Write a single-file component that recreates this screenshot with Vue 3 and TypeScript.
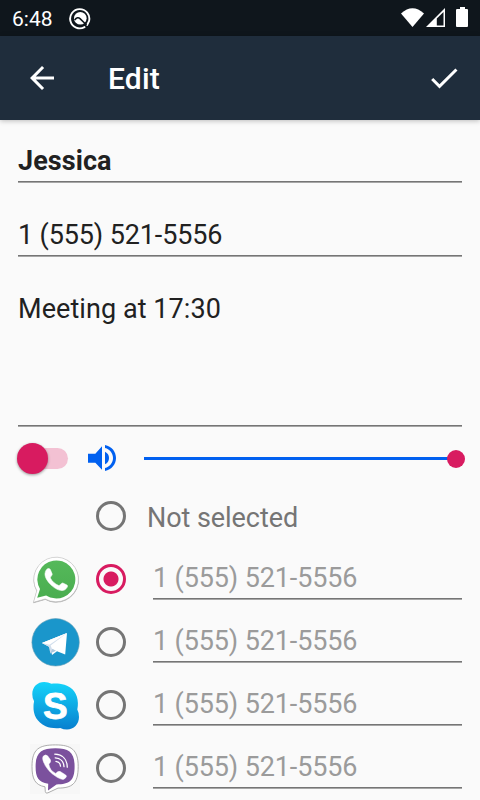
<script setup lang="ts">
import { ref } from 'vue'

type Messenger = 'none' | 'whatsapp' | 'telegram' | 'skype' | 'viber'

const selected = ref<Messenger>('whatsapp')
const name = 'Jessica'
const phone = '1 (555) 521-5556'
const note = 'Meeting at 17:30'
const messengers: Messenger[] = ['whatsapp', 'telegram', 'skype', 'viber']
</script>

<template>
  <div class="screen">
    <div class="status">
      <span class="time">6:48</span>
      <svg class="status-app" viewBox="0 0 24 24" width="24" height="24">
        <path d="M15.5 21.1A9.6 9.6 0 1 1 20.1 14.9L18.2 18.9" fill="none" stroke="#fff" stroke-width="1.9" stroke-linecap="round" />
        <circle cx="11.3" cy="12.2" r="6.3" fill="#fff" />
        <path d="M5.6 14Q8.6 10.2 11 12.6L17.5 19" fill="none" stroke="#0f161c" stroke-width="1.5" />
      </svg>
      <svg class="status-icons" viewBox="0 0 70 24" width="70" height="24">
        <path d="M1 7.5Q12.5-3 24 7.5L12.5 21Z" fill="#fff" />
        <path d="M26 21L45 2V21Z" fill="#fff" />
        <path d="M36.8 19.5V12.6L43.5 6V19.5Z" fill="#0f161c" />
        <path d="M57.2 3H60V1H65V3H67Q68 3 68 4V20Q68 21 67 21H57Q56 21 56 20V4Q56 3 57.2 3Z" fill="#fff" />
      </svg>
    </div>

    <header class="toolbar">
      <svg class="back" viewBox="0 0 24 24" width="36" height="36">
        <path d="M20 11H7.83l5.59-5.59L12 4l-8 8 8 8 1.41-1.41L7.83 13H20v-2z" fill="#fff" />
      </svg>
      <h1>Edit</h1>
      <svg class="done" viewBox="0 0 24 24" width="36" height="36">
        <path d="M9 16.17L4.83 12l-1.42 1.41L9 19 21 7l-1.41-1.41z" fill="#fff" />
      </svg>
    </header>

    <main>
      <div class="field name"><span>{{ name }}</span></div>
      <div class="field phone"><span>{{ phone }}</span></div>
      <div class="field note"><span>{{ note }}</span></div>

      <div class="sound">
        <div class="switch"><i class="knob"></i></div>
        <svg class="volume" viewBox="0 0 84 78" width="28" height="26">
          <g fill="#0060f0">
            <path d="M0 26H22L42 4V74L22 53H0Z" />
            <path d="M51 20Q63 26 63 39T51 58Z" />
            <path d="M51 0C71 4 84 20 84 39S71 74 51 78V69C66 65 75 53 75 39S66 13 51 9Z" />
          </g>
        </svg>
        <div class="slider"><i class="handle"></i></div>
      </div>

      <div class="none-row">
        <button class="radio" :class="{ on: selected === 'none' }" @click="selected = 'none'"></button>
        <span>Not selected</span>
      </div>

      <div v-for="m in messengers" :key="m" class="row">
        <svg class="logo" viewBox="0 0 50 50" width="50" height="50">
          <g v-if="m === 'whatsapp'">
            <defs>
              <linearGradient id="green" x1="0" y1="0" x2="0" y2="1">
                <stop offset="0" stop-color="#55b95a" />
                <stop offset="1" stop-color="#4aad50" />
              </linearGradient>
            </defs>
            <path d="M3.5 47.3L6.8 35.6A22.3 22.3 0 1 1 15.2 43.9Z" transform="translate(.1 .5)" fill="#888" stroke="#bbb" stroke-width=".8" />
            <path d="M3.5 47.3L6.8 35.6A22.3 22.3 0 1 1 15.2 43.9Z" fill="#fff" stroke="#bbb" stroke-width=".5" />
            <path d="M7.2 42.8L10 34.1A19 19 0 1 1 16.1 40.4Z" fill="url(#green)" />
            <path d="M17.3 14.7C18.4 13.7 20.1 13.8 20.7 15.1L22.6 19.6C22.9 20.6 20.4 22.7 20.7 23.5C22.6 27.1 25.3 29.4 29.1 31C30.2 31.3 32.1 28 33.2 28.5L37.3 30.5C39 31.4 36.8 34.3 35.2 35.3C31.9 37.2 26.7 35 22.8 31.6C18.5 27.9 15.2 23.2 15.4 19.2Q15.5 16.5 17.3 14.7Z" fill="#fff" stroke="#fff" stroke-width=".6" transform="translate(-.4 -.5)" />
          </g>
          <g v-else-if="m === 'telegram'">
            <circle cx="25.6" cy="24.3" r="23.7" fill="#1a96cb" stroke="#659db6" stroke-width=".6" />
            <path d="M12 24.9L37 15.1L35.2 36.6L27 33.2L22 37L20.3 29.4Z" fill="#fff" />
            <path d="M12 24.9L37 15.1L20.6 27.6L22.4 32L20.4 35.4L18.8 28.6Z" fill="#d2dfed" />
            <path d="M12 24.9L37 15.1L19.4 26.8Z" fill="#fff" />
            <path d="M20.2 35.6L22.4 30.8L26 32.7Z" fill="#afc8de" />
          </g>
          <g v-else-if="m === 'skype'">
            <defs>
              <linearGradient id="sky" gradientUnits="userSpaceOnUse" x1="0" y1="1" x2="0" y2="48">
                <stop offset="0" stop-color="#14d4fa" />
                <stop offset="1" stop-color="#0880cf" />
              </linearGradient>
            </defs>
            <path d="M2.3 13.2C2.3 5.8 7.5 1 14.2 1Q18.3 1 21.5 2.7C25 2.2 30 2.4 34.5 3.8C43 6.3 47.7 13.5 47.9 22Q48 25 47.3 28.6Q49 31.7 49 36C49 43 43.8 48.6 37 48.6Q33.5 48.6 30.3 47C25 47.5 20 47 15.6 45.2C7 41 3 34 3.5 25Q3.6 22.5 4.1 20.3Q2.3 17.5 2.3 13.2Z" fill="url(#sky)" />
            <text x="25.4" y="37.8" text-anchor="middle" class="skype-s">S</text>
          </g>
          <g v-else>
            <rect x="0" y="0" width="50" height="50" fill="#f7f7f7" />
            <path d="M25.5 .9C41 .9 48.2 5.5 48.2 22.5C48.2 40 42 44 28 44.1L18 48.8Q15 50 15.2 45.8L15 42.8C5 41 2 35 2 22.5C2 5 9 .9 25.5 .9Z" fill="#fff" stroke="#999" stroke-width=".8" />
            <path d="M25.5 4.3C39 4.3 44.6 8.5 44.6 22.5C44.6 36.8 39.5 40.3 26.5 40.4L18 46.5L18.2 39.8C8.5 38.2 5.6 33.8 5.6 22.5C5.6 8.5 11.5 4.3 25.5 4.3Z" fill="#7b519d" />
            <path d="M13.2 12.2Q15.8 9.7 17.8 12.1L20.4 15.7Q21.5 18 18.8 20Q19.6 26.5 25.7 29.4Q28.2 26.7 30.2 27.5L35.7 31Q37.8 32.5 34.3 35.1Q32.2 36.2 27.2 33.3Q16.6 27 13.1 16.8Q12.2 13.8 13.2 12.2Z" fill="#fff" stroke="#fff" stroke-width=".5" />
            <path d="M24.8 10.2C32.5 10.5 37.2 15.4 37.3 23.2M25.2 13.8C30.4 14 33.7 17.5 34 22.6M26 17.4Q30.2 18 30.5 22.2" fill="none" stroke="#fff" stroke-width="1.3" stroke-linecap="round" />
          </g>
        </svg>
        <button class="radio" :class="{ on: selected === m }" @click="selected = m"></button>
        <div class="hint"><span>{{ phone }}</span></div>
      </div>
    </main>
  </div>
</template>

<style>
body {
  overflow: hidden;
  background: #fafafa;
}
</style>

<style scoped>
.screen {
  width: 480px;
  height: 800px;
  overflow: hidden;
  background: #fafafa;
  font: 27px/32px Roboto, sans-serif;
  color: #212121;
}
.status {
  box-sizing: border-box;
  height: 36px;
  padding: 6px 10px 0 12px;
  display: flex;
  align-items: flex-start;
  background: #0f161c;
}
.time {
  width: 57px;
  font-size: 21px;
  line-height: 26px;
  color: #fff;
}
.status-icons {
  margin-left: auto;
}
.toolbar {
  box-sizing: border-box;
  height: 84px;
  padding: 0 18px 0 24px;
  display: flex;
  align-items: center;
  background: #1f2d3c;
  box-shadow: 0 1px 5px rgba(0, 0, 0, 0.25);
}
h1 {
  margin: 0 auto 0 48px;
  padding-top: 1px;
  font-size: 30px;
  line-height: 35px;
  font-weight: 500;
  letter-spacing: 0.2px;
  color: #fff;
}
main {
  padding: 25px 18px 0;
}
.field,
.hint {
  box-sizing: border-box;
  height: 38px;
  border-bottom: 1px solid #a6a6a6;
  box-shadow: inset 0 -1px #757575;
}
.field {
  margin-bottom: 36px;
}
.name {
  font-weight: 700;
  letter-spacing: 0.07px;
}
.phone,
.hint {
  letter-spacing: -0.13px;
}
.field.note {
  height: 134px;
  margin-bottom: 0;
  letter-spacing: 0.07px;
}
.field span,
.hint span {
  display: block;
}
.sound {
  box-sizing: border-box;
  display: flex;
  align-items: center;
  height: 63px;
}
.switch {
  width: 48px;
  height: 21px;
  margin: 0 20px 0 2px;
  border-radius: 11px;
  background: #f3c1d3;
  display: flex;
  align-items: center;
}
.knob {
  flex: none;
  width: 31px;
  height: 31px;
  margin-left: -3px;
  border-radius: 50%;
  background: #d81b60;
  box-shadow: 0 1px 3px rgba(0, 0, 0, 0.4);
}
.volume {
  margin-bottom: 1px;
}
.slider {
  width: 312px;
  height: 3px;
  margin-left: 28px;
  background: #0060f0;
  display: flex;
  align-items: center;
  justify-content: flex-end;
}
.handle {
  flex: none;
  width: 18px;
  height: 18px;
  margin-right: -8.5px;
  border-radius: 50%;
  background: #d81b60;
}
.none-row {
  display: flex;
  align-items: flex-start;
  height: 58px;
  padding-left: 78px;
  color: #757575;
}
.none-row .radio {
  margin-top: 11px;
}
.none-row span {
  margin: 12px 0 0 21px;
  letter-spacing: -0.06px;
}
.radio {
  flex: none;
  box-sizing: border-box;
  width: 30px;
  height: 30px;
  padding: 0;
  border: 3px solid #757575;
  border-radius: 50%;
  background: transparent;
}
.radio.on {
  border-color: #d81b60;
  background: radial-gradient(circle, #d81b60 7px, transparent 8px);
}
.row {
  display: flex;
  align-items: flex-start;
  height: 63px;
  padding-left: 12px;
}
.logo {
  flex: none;
  margin-top: 7px;
}
.row .radio {
  margin: 16px 27px 0 16px;
}
.hint {
  flex: 1;
  margin-top: 14px;
  color: #9b9b9b;
}
.skype-s {
  font: 700 37px "Liberation Sans", sans-serif;
  letter-spacing: 0;
  fill: #fff;
  stroke: #fff;
  stroke-width: 0.8px;
  stroke-linejoin: round;
}
</style>
